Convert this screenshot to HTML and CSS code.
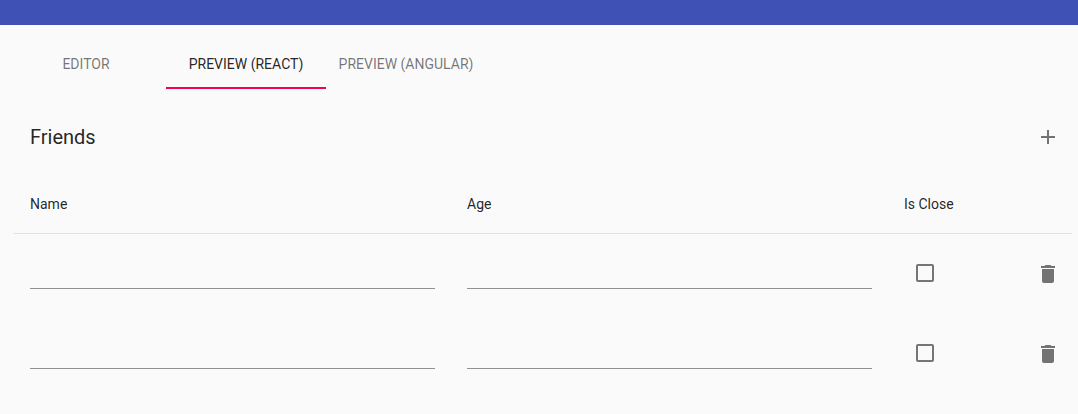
FILE: index.html
```html
<!DOCTYPE html>
<html lang="en">
<head>
<meta charset="utf-8">
<meta name="viewport" content="width=device-width, initial-scale=1">
<title>Friends</title>
<link rel="stylesheet" href="styles.css">
</head>
<body>
<header class="app-bar"></header>
<div class="tabs" role="tablist">
  <button class="tab" type="button" role="tab" aria-selected="false">EDITOR</button>
  <button class="tab tab-active" type="button" role="tab" aria-selected="true">PREVIEW (REACT)</button>
  <button class="tab" type="button" role="tab" aria-selected="false">PREVIEW (ANGULAR)</button>
</div>
<main class="content">
  <div class="toolbar">
    <h1 class="title">Friends</h1>
    <button class="icon-button" type="button" aria-label="Add friend">
      <svg class="icon" viewBox="0 0 24 24"><path d="M19 13h-6v6h-2v-6H5v-2h6V5h2v6h6v2z"/></svg>
    </button>
  </div>
  <table class="table">
    <colgroup><col><col><col class="col-close"><col class="col-action"></colgroup>
    <thead>
      <tr><th scope="col">Name</th><th scope="col">Age</th><th scope="col">Is Close</th><th></th></tr>
    </thead>
    <tbody>
      <tr>
        <td><input class="field" type="text" aria-label="Name"></td>
        <td><input class="field" type="text" aria-label="Age"></td>
        <td><input class="check" type="checkbox" aria-label="Is Close"></td>
        <td class="action"><button class="icon-button" type="button" aria-label="Delete friend">
          <svg class="icon" viewBox="0 0 24 24"><path d="M6 19c0 1.1.9 2 2 2h8c1.1 0 2-.9 2-2V7H6v12zM19 4h-3.5l-1-1h-5l-1 1H5v2h14V4z"/></svg>
        </button></td>
      </tr>
      <tr>
        <td><input class="field" type="text" aria-label="Name"></td>
        <td><input class="field" type="text" aria-label="Age"></td>
        <td><input class="check" type="checkbox" aria-label="Is Close"></td>
        <td class="action"><button class="icon-button" type="button" aria-label="Delete friend">
          <svg class="icon" viewBox="0 0 24 24"><path d="M6 19c0 1.1.9 2 2 2h8c1.1 0 2-.9 2-2V7H6v12zM19 4h-3.5l-1-1h-5l-1 1H5v2h14V4z"/></svg>
        </button></td>
      </tr>
    </tbody>
  </table>
</main>
</body>
</html>
```
FILE: styles.css
```css
* {
  box-sizing: border-box;
}

body {
  margin: 0;
  background: #fafafa;
  color: rgba(0, 0, 0, 0.87);
  font-family: Roboto, "Liberation Sans", sans-serif;
  font-size: 14px;
  line-height: 20px;
}

.app-bar {
  height: 25px;
  background: #3f51b5;
}

.tabs {
  display: flex;
  padding: 16px 6px 0;
}

.tab {
  min-width: 160px;
  height: 48px;
  padding: 0 12px;
  border: 0;
  border-bottom: 2px solid transparent;
  background: none;
  color: rgba(0, 0, 0, 0.54);
  font: inherit;
}

.tab-active {
  border-bottom-color: #f50057;
  color: rgba(0, 0, 0, 0.87);
}

.content {
  padding: 16px 6px 20px 14px;
}

.toolbar {
  display: flex;
  align-items: center;
  justify-content: space-between;
  height: 64px;
  padding-left: 16px;
}

.title {
  margin: 0;
  font-size: 20px;
  font-weight: 400;
  line-height: 32px;
}

.icon-button {
  display: inline-flex;
  padding: 12px;
  border: 0;
  background: none;
  color: rgba(0, 0, 0, 0.54);
}

.icon {
  width: 24px;
  height: 24px;
  fill: currentColor;
}

.table {
  width: 100%;
  margin-top: 4px;
  border-collapse: separate;
  border-spacing: 0;
  table-layout: fixed;
}

.col-close {
  width: 120px;
}

.col-action {
  width: 64px;
}

th {
  height: 61px;
  padding: 2px 16px 0;
  border-bottom: 1px solid #e0e0e0;
  font-weight: 400;
  text-align: left;
}

td {
  height: 80px;
  padding: 0 16px 2px;
  vertical-align: middle;
}

.action {
  padding: 0;
  text-align: right;
}

.action .icon-button {
  vertical-align: middle;
}

.field {
  display: block;
  width: 100%;
  height: 32px;
  padding: 6px 0;
  border: 0;
  border-bottom: 1px solid #909090;
  background: none;
  font: inherit;
}

.check {
  display: block;
  appearance: none;
  width: 18px;
  height: 18px;
  margin: 0 12px;
  border: 2px solid #757575;
  border-radius: 2px;
}
```
